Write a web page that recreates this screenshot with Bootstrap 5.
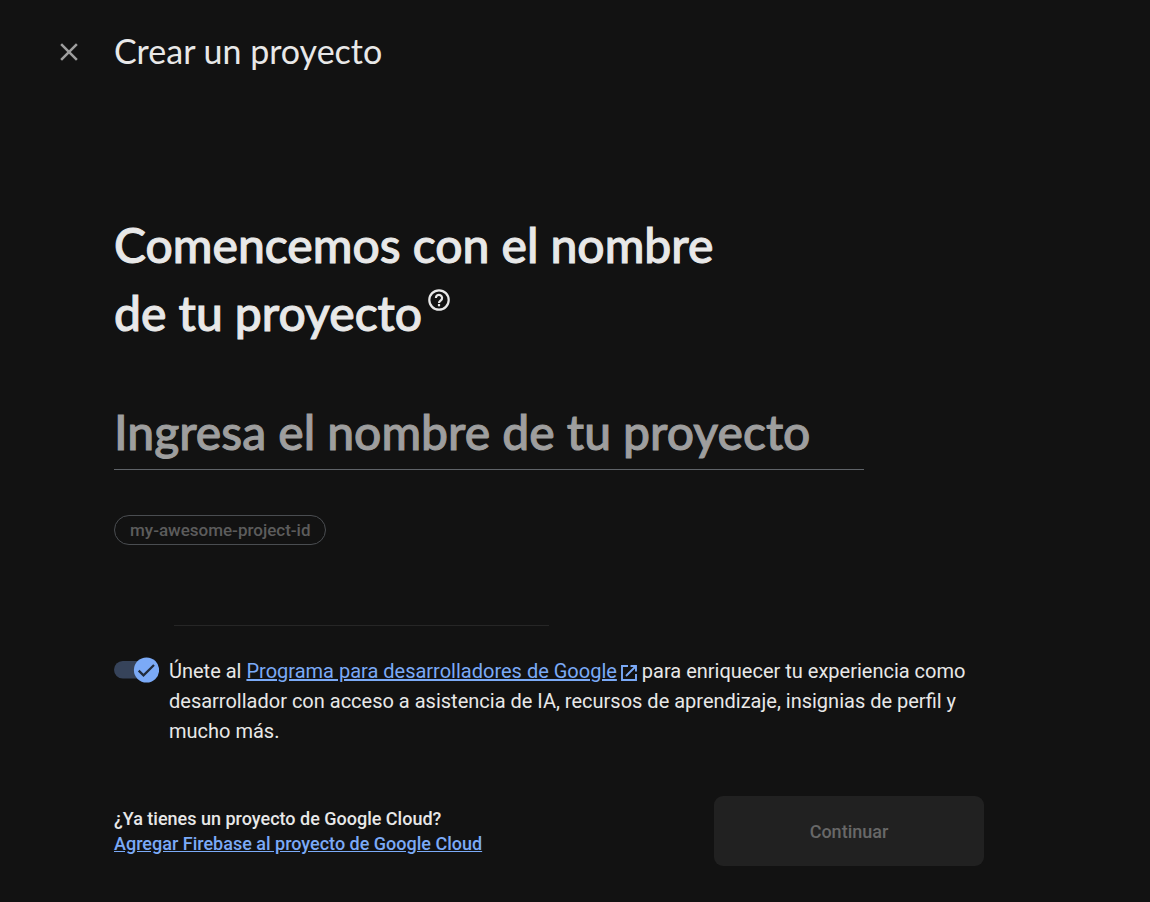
<!DOCTYPE html>
<html lang="es">
<head>
<meta charset="utf-8">
<meta name="viewport" content="width=device-width, initial-scale=1">
<title>Crear un proyecto</title>
<link rel="stylesheet" href="https://cdn.jsdelivr.net/npm/bootstrap@5.3.0/dist/css/bootstrap.min.css">
<style>
  body { background: #121212; color: #e8e8e8; font-family: Roboto, "Liberation Sans", sans-serif; font-size: 20px; line-height: 30px; }
  a, a:hover { color: #7baaf7; }
  .display-face { font-family: Lato, "Open Sans", sans-serif; }
  .topbar { padding: 28px 54px 0; gap: 30px; }
  .topbar h1 { font-size: 34px; line-height: 46px; padding-bottom: 2px; }
  .close-btn { width: 30px; height: 30px; color: #9e9e9e; }
  .wizard { padding: 135px 48px 0 114px; }
  .form-area { max-width: 870px; }
  .question { font-size: 48px; line-height: 68px; font-weight: 500; max-width: 640px; -webkit-text-stroke: 1px currentColor; }
  .help-btn { width: 24px; height: 28px; margin-left: 5px; padding: 4px 0 0; }
  .name-input, .name-input:focus { max-width: 750px; height: 72px; margin-top: 51px; padding: 0 0 5px; font-size: 48px; font-weight: 500; line-height: 60px; color: #e8e8e8; background: transparent; border-bottom: 1px solid #5f6368; -webkit-text-stroke: 1px currentColor; }
  .name-input::placeholder { color: #9e9e9e; opacity: 1; }
  .id-chip, .id-chip:disabled { margin-top: 45px; height: 30px; padding: 0 15px; font-size: 17px; line-height: 28px; font-weight: 500; color: #5c5c5c; background: transparent; border: 1px solid #4a4d51; opacity: 1; }
  .divider { width: 375px; max-width: 80%; margin: 80px 0 30px 60px; border-top: 1px solid #262626; }
  .switch { width: 45px; height: 26px; margin-top: 1px; }
  .switch input { width: 45px; height: 26px; cursor: pointer; }
  .optin { gap: 10px; }
  .optin label { max-width: 805px; }
  .actions { margin-top: 50px; }
  .cloud-note { font-size: 18px; line-height: 25px; font-weight: 500; }
  .next-btn, .next-btn:disabled { width: 270px; height: 70px; font-size: 18px; font-weight: 500; color: #686868; background: #212121; border: 0; border-radius: 9px; opacity: 1; }
</style>
</head>
<body>
<header class="topbar d-flex align-items-center">
  <button type="button" class="close-btn btn p-0 border-0 d-flex" aria-label="Cerrar">
    <svg width="30" height="30" viewBox="0 0 24 24" fill="currentColor"><path d="M19 6.41 17.59 5 12 10.59 6.41 5 5 6.41 10.59 12 5 17.59 6.41 19 12 13.41 17.59 19 19 17.59 13.41 12z"/></svg>
  </button>
  <h1 class="display-face fw-normal m-0">Crear un proyecto</h1>
</header>

<main class="wizard">
  <form class="form-area">
    <h2 class="question display-face mb-0">Comencemos con el nombre de tu proyecto<button type="button" class="help-btn btn border-0 text-reset align-text-top" aria-label="Ayuda"><svg class="d-block" width="24" height="24" viewBox="0 0 24 24" fill="none" stroke="currentColor" stroke-width="2.2"><circle cx="12" cy="12" r="9.7"/><path d="M8.9 10a3.1 3.1 0 1 1 4.8 2.5c-1.100.8-1.700 1.300-1.700 2.500"/><path d="M12 16v2.300"/></svg></button></h2>

    <input class="name-input display-face form-control rounded-0 border-top-0 border-start-0 border-end-0 shadow-none" type="text" placeholder="Ingresa el nombre de tu proyecto" aria-label="Nombre del proyecto">

    <button type="button" class="id-chip btn rounded-pill d-block" disabled>my-awesome-project-id</button>

    <div class="divider"></div>

    <div class="optin d-flex align-items-start">
      <div class="switch position-relative flex-shrink-0">
        <input id="program" type="checkbox" role="switch" checked class="position-absolute top-0 start-0 m-0 opacity-0">
        <svg class="d-block pe-none" width="45" height="26" viewBox="0 0 45 26"><rect y="4" width="42" height="17.500" rx="8.750" fill="#36435a"/><circle cx="32.500" cy="13" r="12.600" fill="#7baaf7"/><path d="M24.700 13.600l4.800 4.800L40 8" fill="none" stroke="#202b3c" stroke-width="2.200"/></svg>
      </div>
      <label for="program">Únete al <a href="#">Programa para desarrolladores de Google</a><svg class="ms-1" width="16" height="16" viewBox="0 0 16 16" fill="none" stroke="#7baaf7" stroke-width="1.900"><path d="M7 1H1v14h14V9M9.500 1H15v5.500M15 1L5 11"/></svg> para enriquecer tu experiencia como desarrollador con acceso a asistencia de IA, recursos de aprendizaje, insignias de perfil y mucho más.</label>
    </div>

    <div class="actions d-flex flex-wrap align-items-center justify-content-between gap-3">
      <div class="cloud-note">¿Ya tienes un proyecto de Google Cloud?<br><a href="#">Agregar Firebase al proyecto de Google Cloud</a></div>
      <button type="submit" class="next-btn btn" disabled>Continuar</button>
    </div>
  </form>
</main>
<script src="https://cdn.jsdelivr.net/npm/bootstrap@5.3.0/dist/js/bootstrap.bundle.min.js"></script>
</body>
</html>
